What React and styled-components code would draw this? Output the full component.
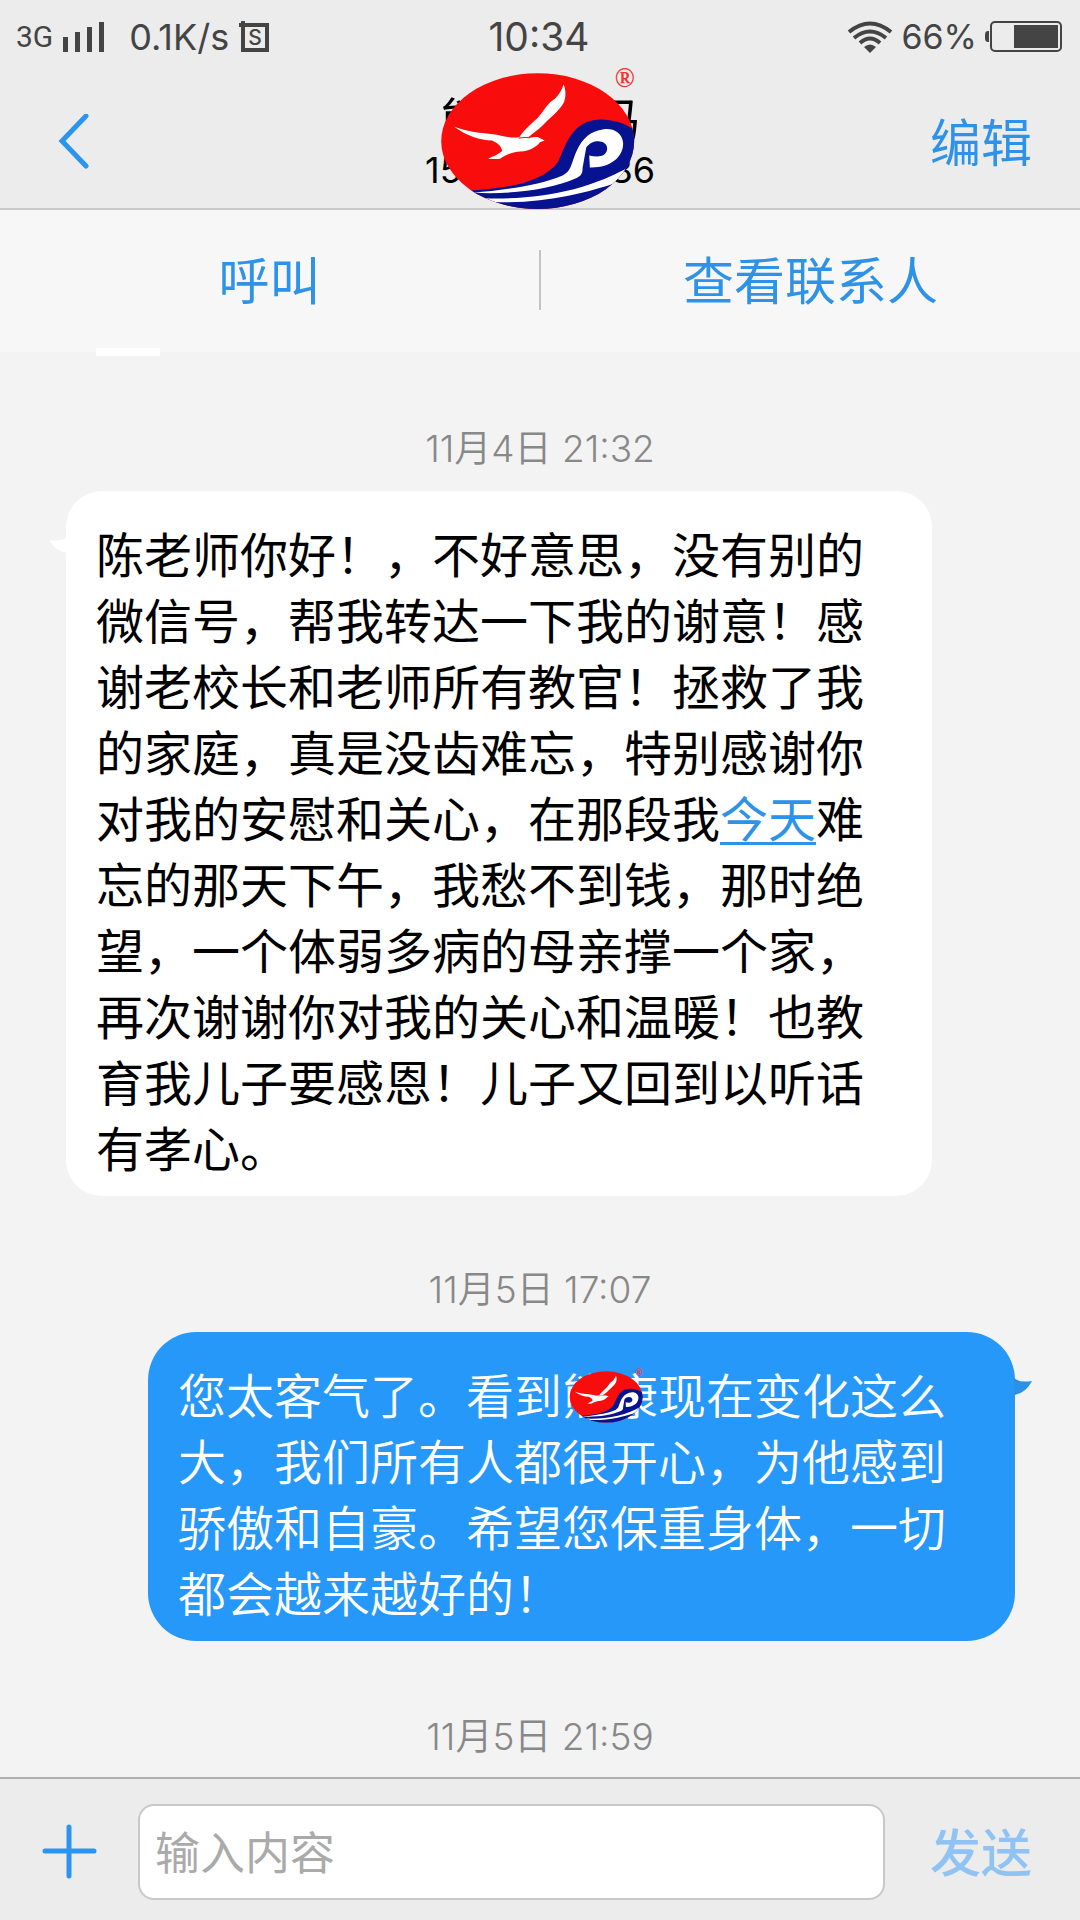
import React, { useState } from "react";
import styled, { createGlobalStyle } from "styled-components";

const GlobalStyle = createGlobalStyle`
* {
  box-sizing: border-box;
}
body {
  margin: 0;
  background: #f3f3f3;
  font-family: Inter, "Noto Sans CJK SC", sans-serif;
  text-spacing-trim: space-all;
}
button, input {
  font-family: inherit;
}
`

const Page = styled.div`
display: flex;
flex-direction: column;
min-height: 100vh;
`

const Top = styled.header`
background: #ececec;
border-bottom: 2px solid #c9c9c9;
`

const StatusBar = styled.div`
display: grid;
grid-template-columns: 1fr auto 1fr;
align-items: center;
height: 73px;
padding: 0 18px 0 16px;
color: #444;
line-height: 40px;
`

const StatusGroup = styled.div`
display: flex;
align-items: center;
gap: ${props => props.$end ? "8px" : "10px"};
font-size: 36px;
justify-content: ${props => props.$end ? "flex-end" : "flex-start"};
`

const Network = styled.span`
font-family: Roboto, sans-serif;
font-size: 30px;
`

const Speed = styled.span`
margin-left: 14px;
`

const Battery = styled.span`
font-size: 34px;
`

const Clock = styled.span`
font-size: 39px;
`

const TitleBar = styled.div`
display: grid;
grid-template-columns: 1fr auto 1fr;
align-items: center;
height: 135px;
padding: 3px 48px 0;
`

const TextButton = styled.button`
border: 0;
padding: 4px 0 0;
background: none;
color: ${props => props.$faded ? "#8fc3f3" : "#2e93e8"};
font-size: 51px;
font-weight: ${props => props.$faded ? 500 : 400};
line-height: 60px;
justify-self: end;
`

const IconButton = styled.button`
display: flex;
border: 0;
padding: 0;
background: none;
justify-self: start;
`

const Contact = styled.div`
position: relative;
display: flex;
flex-direction: column;
align-items: center;
`

const ContactName = styled.h1`
margin: 0;
font-size: 50px;
font-weight: 400;
line-height: 56px;
`

const ContactPhone = styled.div`
display: flex;
justify-content: space-between;
width: 230px;
font-size: 36px;
line-height: 40px;
`

const TitleLogo = styled.span`
position: absolute;
left: 15px;
top: -32px;
display: flex;
`

const Actions = styled.nav`
position: relative;
display: grid;
grid-template-columns: 1fr 2px 1fr;
align-items: center;
height: 142px;
padding-bottom: 2px;
background: #f7f7f7;
&::after {
  content: "";
  position: absolute;
  left: 96px;
  bottom: -4px;
  width: 64px;
  height: 8px;
  background: #fff;
}
`

const Action = styled.button`
border: 0;
padding: 4px 0 0;
background: none;
color: #2e93e8;
font-size: 51px;
line-height: 60px;
`

const Divider = styled.span`
height: 60px;
background: #c4c4c4;
`

const Chat = styled.main`
flex: 1;
padding: 77px 0 19px;
`

const Stamp = styled.time`
display: block;
color: #888;
font-size: 37px;
font-weight: 350;
line-height: 40px;
text-align: center;
`

const Message = styled.div`
padding: ${props => props.$sent ? "22px 65px 76px 148px" : "22px 148px 74px 66px"};
`

const Bubble = styled.p`
position: relative;
margin: 0;
padding: 32px 66px 13px 30px;
border-radius: ${props => props.$sent ? "48px" : "36px"};
background: ${props => props.$sent ? "#2698fa" : "#fff"};
color: ${props => props.$sent ? "#fff" : "#000"};
font-size: 48px;
font-weight: ${props => props.$sent ? 350 : 400};
line-height: 66px;
`

const Tail = styled.svg`
position: absolute;
top: 46px;
${props => props.$sent ? "right: -17px;" : "left: -17px;"}
`

const DateLink = styled.a`
color: #2e93e8;
text-decoration: underline;
text-decoration-thickness: 3px;
text-underline-offset: 5px;
`

const Covered = styled.span`
position: relative;
`

const InlineLogo = styled.span`
position: absolute;
left: 7px;
top: 0;
display: flex;
`

const Composer = styled.form`
display: grid;
grid-template-columns: auto 1fr auto;
align-items: center;
height: 143px;
padding: 4px 48px 0 42px;
border-top: 2px solid #b0b0b0;
background: #ececec;
`

const TextBox = styled.input`
min-width: 0;
height: 96px;
margin: 0 45px 0 41px;
padding: 3px 15px 0;
border: 2px solid #c8c8c8;
border-radius: 16px;
background: #fff;
font-size: 45px;
&::placeholder {
  color: #aaa;
  opacity: 1;
}
`

function Logo({ width, height, id }) {
  return (
    <svg width={width} height={height} viewBox="120 35 600 445" overflow="visible" role="img" aria-label="logo">
      <clipPath id={id}>
        <ellipse cx="413" cy="273" rx="290" ry="204" />
      </clipPath>
      <g clipPath={`url(#${id})`}>
        <rect x="120" y="65" width="590" height="415" fill="#f80c0c" />
        <path d="M210 422 C330 414 430 396 474 336 C496 290 515 210 600 208 C650 208 690 226 710 246 V480 H210 Z" fill="#06128f" />
        <path d="M220 428 C330 434 450 420 530 384 C546 376 548 368 548 354 L559 292 C580 264 622 270 622 296 C620 320 596 322 568 316 L570 352 C630 354 670 322 670 280 C668 246 640 234 612 237 C570 242 548 266 532 298 C512 342 516 362 488 376 C420 406 310 420 220 428 Z" fill="#fff" />
        <path d="M255 445 C420 450 570 420 700 344 L650 398 C560 428 430 462 280 456 Z" fill="#fff" />
      </g>
      <path d="M161 229 C200 244 245 250 280 252 C310 256 330 266 358 261 C366 246 392 222 412 204 C430 184 445 155 464 146 C478 134 486 118 491 103 C499 120 498 146 490 160 C476 184 446 206 430 224 C414 240 396 252 384 262 C396 264 406 258 416 262 L434 271 L420 276 C410 290 390 300 372 303 C346 304 324 308 300 326 C288 328 276 326 264 326 C280 318 298 312 306 302 C304 290 296 280 276 271 C240 270 200 258 161 229 Z" fill="#fff" />
      <path d="M356 264 Q372 260 390 263" stroke="#f80c0c" strokeWidth="3" fill="none" />
      <text x="675" y="110" fontFamily="Liberation Serif, serif" fontSize="80" fontWeight="bold" fill="#f83030" textAnchor="middle">®</text>
    </svg>
  )
}

export default function App() {
  const [text, setText] = useState("");

  const handleChange = event => {
    setText(event.target.value)
  }

  const submitForm = event => {
    event.preventDefault();
    setText("")
  }

  return (
    <Page>
      <GlobalStyle />
      <Top>
        <StatusBar>
          <StatusGroup>
            <Network>3G</Network>
            <svg width="42" height="30" viewBox="0 0 42 30" fill="#444">
              <path d="M0 15h5v15H0zM12 10h5v20h-5zM24 5h5v25h-5zM36 0h5v30h-5z" />
            </svg>
            <Speed>0.1K/s</Speed>
            <svg width="30" height="32" viewBox="0 0 30 32">
              <path d="M0 4H28V29H4V0" fill="none" stroke="#444" strokeWidth="4" />
              <text x="16" y="24" fontSize="21" fontWeight="500" fill="#444" textAnchor="middle">S</text>
            </svg>
          </StatusGroup>
          <Clock>10:34</Clock>
          <StatusGroup $end>
            <svg width="46" height="32" viewBox="0 0 46 32" fill="none" stroke="#444" strokeWidth="4">
              <path d="M2 11Q23 -6 44 11" />
              <path d="M7 17Q23 4 39 17" />
              <path d="M13 22Q23 13 33 22" />
              <path d="M17 26Q23 21 29 26L23 32Z" fill="#444" stroke="none" />
            </svg>
            <Battery>66%</Battery>
            <svg width="77" height="31" viewBox="0 0 77 31" fill="#444">
              <path d="M4 10H3Q0 10 0 14V17Q0 21 3 21H4Z" />
              <rect x="6" y="1" width="70" height="29" rx="4" fill="none" stroke="#444" strokeWidth="2" />
              <rect x="29" y="4" width="44" height="23" />
            </svg>
          </StatusGroup>
        </StatusBar>
        <TitleBar>
          <IconButton type="button" aria-label="返回">
            <svg width="50" height="56" viewBox="0 0 50 56" fill="none" stroke="#2a94ef" strokeWidth="5" strokeLinecap="round">
              <path d="M38 2L14 27L38 52" />
            </svg>
          </IconButton>
          <Contact>
            <ContactName>熊康妈妈</ContactName>
            <ContactPhone>
              <span>15</span>
              <span>86</span>
            </ContactPhone>
            <TitleLogo>
              <Logo width={200} height={148} id="title-logo" />
            </TitleLogo>
          </Contact>
          <TextButton type="button">编辑</TextButton>
        </TitleBar>
      </Top>
      <Actions>
        <Action type="button">呼叫</Action>
        <Divider />
        <Action type="button">查看联系人</Action>
      </Actions>
      <Chat>
        <Stamp>11月4日 21:32</Stamp>
        <Message>
          <Bubble>
            陈老师你好！，不好意思，没有别的微信号，帮我转达一下我的谢意！感谢老校长和老师所有教官！拯救了我的家庭，真是没齿难忘，特别感谢你对我的安慰和关心，在那段我<DateLink href="#today">今天</DateLink>难忘的那天下午，我愁不到钱，那时绝望，一个体弱多病的母亲撑一个家，再次谢谢你对我的关心和温暖！也教育我儿子要感恩！儿子又回到以听话有孝心。
            <Tail width="18" height="18" viewBox="0 0 18 18" fill="#fff">
              <path d="M18 0Q12 5 0 3Q6 14 18 16Z" />
            </Tail>
          </Bubble>
        </Message>
        <Stamp>11月5日 17:07</Stamp>
        <Message $sent>
          <Bubble $sent>
            您太客气了。看到<Covered>熊康<InlineLogo><Logo width={76} height={56} id="message-logo" /></InlineLogo></Covered>现在变化这么大，我们所有人都很开心，为他感到骄傲和自豪。希望您保重身体，一切都会越来越好的！
            <Tail $sent width="18" height="18" viewBox="0 0 18 18" fill="#2b90e8">
              <path d="M0 0Q6 5 18 3Q12 15 0 17Z" />
            </Tail>
          </Bubble>
        </Message>
        <Stamp>11月5日 21:59</Stamp>
      </Chat>
      <Composer onSubmit={submitForm}>
        <IconButton type="button" aria-label="添加">
          <svg width="55" height="55" viewBox="0 0 55 55" fill="none" stroke="#2a94ef" strokeWidth="5" strokeLinecap="round">
            <path d="M27 3V52M3 27H52" />
          </svg>
        </IconButton>
        <TextBox type="text" aria-label="输入内容" placeholder="输入内容" value={text} onChange={handleChange} />
        <TextButton type="submit" $faded>发送</TextButton>
      </Composer>
    </Page>
  )
}
